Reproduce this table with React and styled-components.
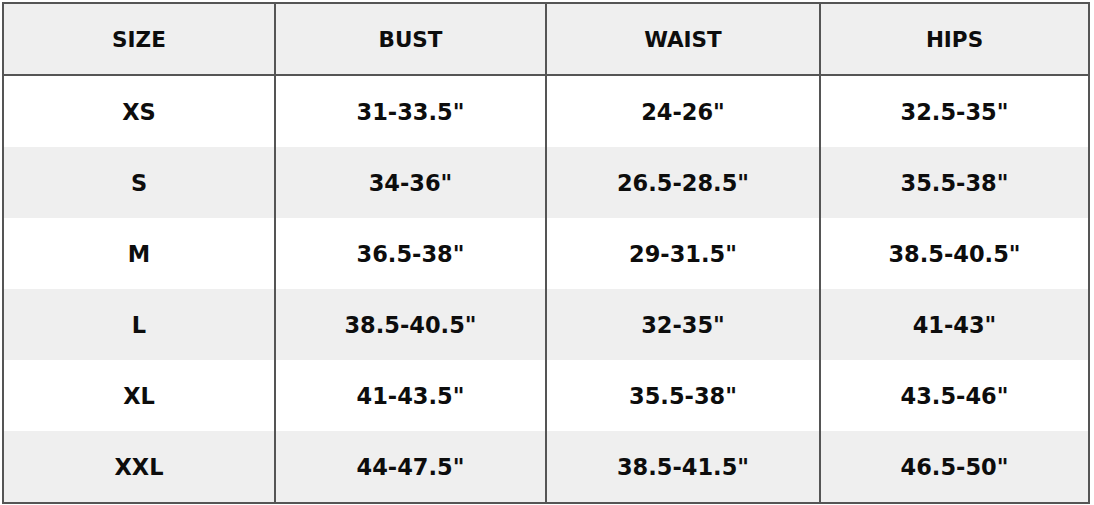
import React from "react";
import styled, { createGlobalStyle } from "styled-components";

const GlobalStyle = createGlobalStyle`
  html, body {
    margin: 0;
    padding: 0;
    background: #ffffff;
  }
`;

const Page = styled.div`
  padding: 2px 0 0 2px;
  font-family: "DejaVu Sans", "Liberation Sans", sans-serif;
`;

const Chart = styled.div`
  width: 1088px;
  box-sizing: border-box;
  border: 2px solid #555555;
  display: grid;
  grid-template-columns: 270px 271px 274px 1fr;
`;

const Cell = styled.div`
  height: ${(p) => (p.$header ? "70px" : "71px")};
  display: flex;
  align-items: center;
  justify-content: center;
  background: ${(p) => (p.$shaded ? "#efefef" : "#ffffff")};
  border-left: ${(p) => (p.$first ? "none" : "2px solid #555555")};
  border-bottom: ${(p) => (p.$header ? "2px solid #555555" : "none")};
  font-size: ${(p) => (p.$header ? "21.5px" : "22.5px")};
  font-weight: 700;
  color: #0d0d0d;
`;

const headers = ["SIZE", "BUST", "WAIST", "HIPS"];

const rows = [
  ["XS", '31-33.5"', '24-26"', '32.5-35"'],
  ["S", '34-36"', '26.5-28.5"', '35.5-38"'],
  ["M", '36.5-38"', '29-31.5"', '38.5-40.5"'],
  ["L", '38.5-40.5"', '32-35"', '41-43"'],
  ["XL", '41-43.5"', '35.5-38"', '43.5-46"'],
  ["XXL", '44-47.5"', '38.5-41.5"', '46.5-50"'],
];

export default function App() {
  return (
    <Page>
      <GlobalStyle />
      <Chart>
        {headers.map((h, i) => (
          <Cell key={h} $header $shaded $first={i === 0}>
            {h}
          </Cell>
        ))}
        {rows.map((row, r) =>
          row.map((value, c) => (
            <Cell key={`${r}-${c}`} $shaded={r % 2 === 1} $first={c === 0}>
              {value}
            </Cell>
          ))
        )}
      </Chart>
    </Page>
  );
}
